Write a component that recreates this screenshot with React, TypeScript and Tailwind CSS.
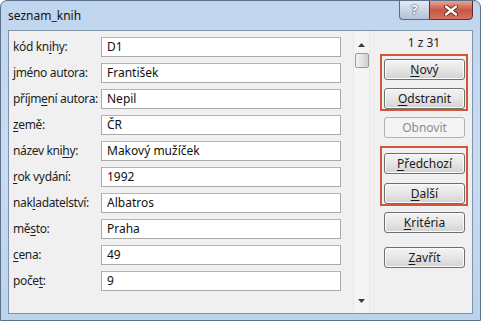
import React from 'react';

type Field = [string, number, string];

const fields: Field[] = [
    ['kód knihy:', 6, 'D1'],
    ['jméno autora:', 0, 'František'],
    ['příjmení autora:', 5, 'Nepil'],
    ['země:', 0, 'ČR'],
    ['název knihy:', 9, 'Makový mužíček'],
    ['rok vydání:', 0, '1992'],
    ['nakladatelství:', 3, 'Albatros'],
    ['město:', 2, 'Praha'],
    ['cena:', 0, '49'],
    ['počet:', 4, '9'],
];

// label with access key underlined
const Hot = ({ text, at }: { text: string; at: number }) => (
    <span className="whitespace-nowrap">
        {text.slice(0, at)}
        <span className="underline underline-offset-2">{text.charAt(at)}</span>
        {text.slice(at + 1)}
    </span>
);

const Btn = ({ text, at, disabled }: { text: string; at: number; disabled?: boolean }) => (
    <div
        className={
            disabled
                ? 'w-[81px] h-[21px] rounded-[3px] border border-[#adb2b5] bg-[#f4f4f4] text-[#8d8d8d] flex items-center justify-center'
                : 'w-[81px] h-[21px] rounded-[3px] border border-[#707070] bg-gradient-to-b from-[#f4f4f4] via-[#e6e6e6] to-[#d2d2d2] text-[#1a1a1a] flex items-center justify-center shadow-[inset_0_0_0_1px_#fbfbfb]'
        }
    >
        {disabled ? text : <Hot text={text} at={at} />}
    </div>
);

const App: React.FC = () => {
    return (
        <div
            className="w-[481px] h-[321px] overflow-hidden rounded-t-[7px] border border-[#5d7089] bg-gradient-to-b from-[#c0d6ee] via-[#c8dcf1] to-[#bcd3ec] text-[12px] text-black"
            style={{ fontFamily: '"Segoe UI", "Noto Sans", "DejaVu Sans", sans-serif' }}
        >
            {/* title bar */}
            <div className="h-[29px] flex items-start">
                <div className="pl-[7px] pt-[6px] text-[12px] text-[#111]">seznam_knih</div>
                <div className="flex-1" />
                <div className="flex mr-[7px] -mt-px">
                    <div className="w-[30px] h-[20px] rounded-bl-[4px] border border-[#5c6a80] border-r-0 bg-gradient-to-b from-[#e3ecf5] via-[#c9d6e4] to-[#b3c3d6] flex items-center justify-center text-[13px] font-bold text-white [text-shadow:0_0_1px_#3b4a5e,0_0_2px_#3b4a5e]">
                        ?
                    </div>
                    <div className="w-[44px] h-[20px] rounded-br-[4px] border border-[#6b2a22] bg-gradient-to-b from-[#e8a493] via-[#c75746] to-[#d4735f] flex items-center justify-center">
                        <svg width="16" height="11" viewBox="0 0 16 11">
                            <path d="M3 1.5 L13 9.5 M13 1.5 L3 9.5" stroke="#4a1812" strokeWidth="4" strokeLinecap="round" />
                            <path d="M3 1.5 L13 9.5 M13 1.5 L3 9.5" stroke="#ffffff" strokeWidth="2.4" strokeLinecap="round" />
                        </svg>
                    </div>
                </div>
            </div>

            {/* client area */}
            <div className="mx-[7px] h-[284px] border border-[#7f93ad] bg-[#f0f0f0] flex">
                {/* fields */}
                <div className="w-[344px] pl-[4px] pt-[6px] flex flex-col gap-[6px]">
                    {fields.map(([label, at, value]) => (
                        <div key={label} className="flex items-center h-[20px]">
                            <div className="w-[88px] shrink-0 text-[#1e1e1e] whitespace-nowrap tracking-[-0.35px]">
                                <Hot text={label} at={at} />
                            </div>
                            <div className="w-[240px] shrink-0 h-[20px] border border-[#a9a9a9] border-t-[#b4b4b4] bg-white pl-[5px] flex items-center text-[#111]">
                                {value}
                            </div>
                        </div>
                    ))}
                </div>

                {/* scrollbar */}
                <div className="w-[17px] flex flex-col items-center pt-[6px] pb-[10px] bg-[#f4f4f4] border-x border-[#e8e8e8]">
                    <svg width="7" height="4" viewBox="0 0 7 4" className="mt-[6px]">
                        <path d="M0 4 L3.5 0 L7 4 Z" fill="#3a3a3a" />
                    </svg>
                    <div className="mt-[6px] w-[14px] h-[15px] rounded-[2px] border border-[#9a9a9a] bg-gradient-to-r from-[#f2f2f2] via-[#e2e2e2] to-[#cfcfcf]" />
                    <div className="flex-1" />
                    <svg width="7" height="4" viewBox="0 0 7 4">
                        <path d="M0 0 L7 0 L3.5 4 Z" fill="#3a3a3a" />
                    </svg>
                </div>

                {/* buttons */}
                <div className="flex-1 pl-[10px] flex flex-col">
                    <div className="w-[88px] h-[23px] flex items-center justify-center text-[#1e1e1e]">1 z 31</div>
                    <div className="w-[88px] h-[57px] border-2 border-[#d0583a] pl-[2px] pt-[3px] flex flex-col gap-[8px]">
                        <Btn text="Nový" at={0} />
                        <Btn text="Odstranit" at={0} />
                    </div>
                    <div className="mt-[6px] pl-[4px]">
                        <Btn text="Obnovit" at={0} disabled />
                    </div>
                    <div className="mt-[8px] w-[88px] h-[60px] border-2 border-[#d0583a] pl-[2px] pt-[5px] flex flex-col gap-[9px]">
                        <Btn text="Předchozí" at={0} />
                        <Btn text="Další" at={0} />
                    </div>
                    <div className="mt-[6px] pl-[4px]">
                        <Btn text="Kritéria" at={0} />
                    </div>
                    <div className="mt-[14px] pl-[4px]">
                        <Btn text="Zavřít" at={0} />
                    </div>
                </div>
            </div>
        </div>
    );
};

export default App;
